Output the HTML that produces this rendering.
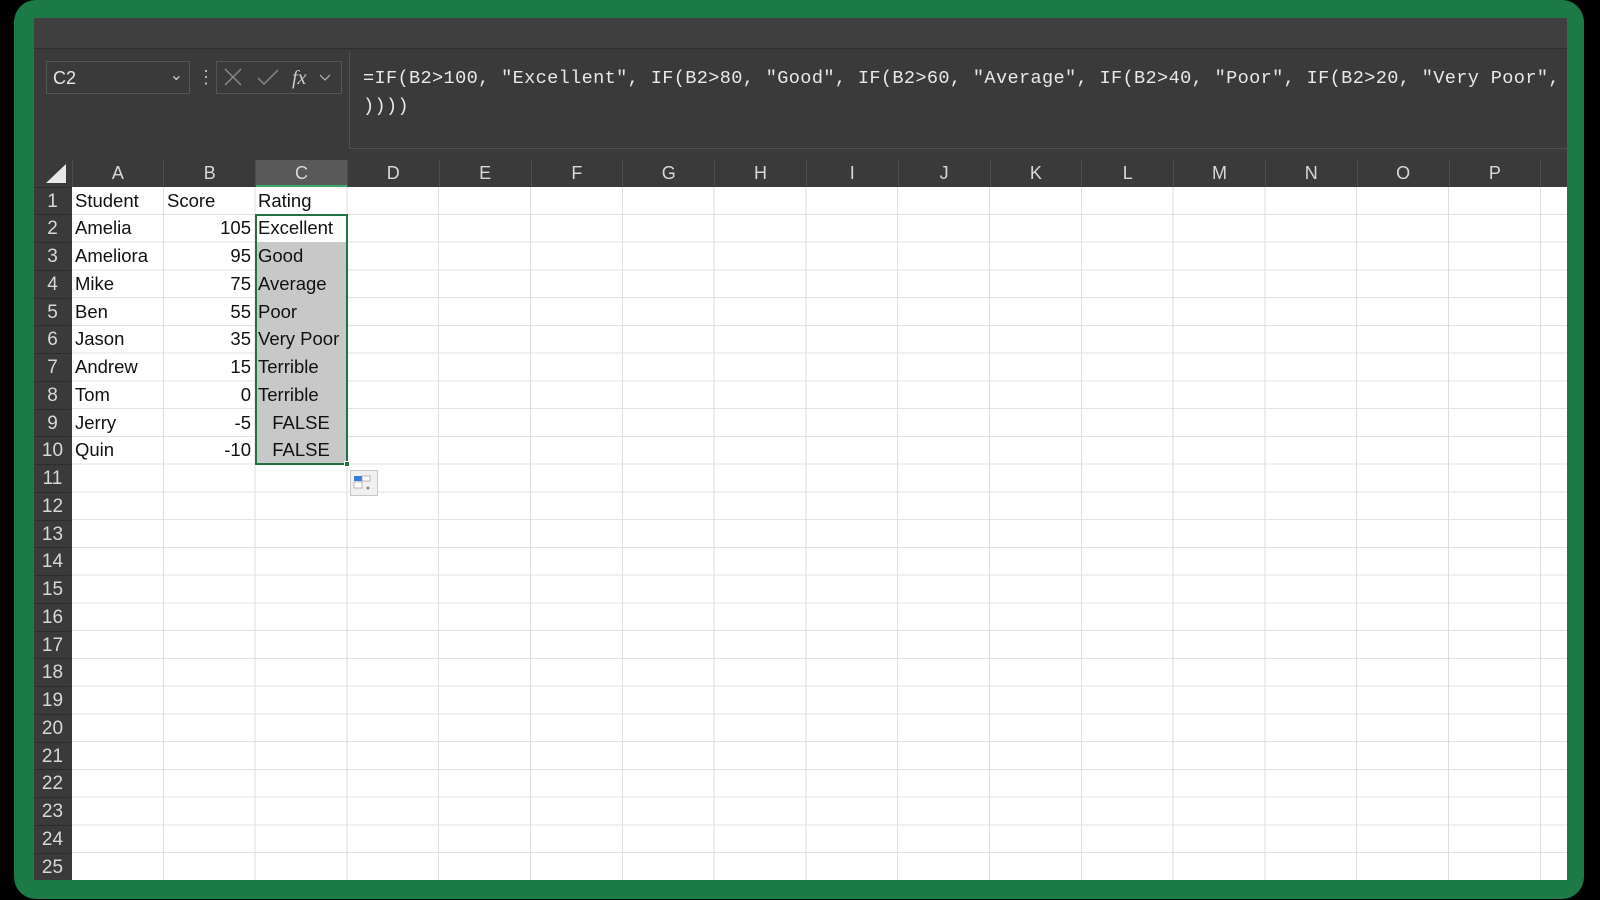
<!DOCTYPE html>
<html><head><meta charset="utf-8"><style>
*{margin:0;padding:0;box-sizing:border-box}
body{width:1600px;height:900px;background:#000;position:relative;overflow:hidden;font-family:"Liberation Sans",sans-serif}
.frame{position:absolute;left:14px;top:0;width:1570px;height:899px;background:#1b7a45;border-radius:22px}
.inner{position:absolute;left:34px;top:18px;width:1533px;height:862px;background:#3a3a3a;overflow:hidden}
.strip{position:absolute;left:0;top:0;width:100%;height:31px;background:#3f3f3f;border-bottom:1px solid #2e2e2e}
.namebox{position:absolute;left:12px;top:43px;width:144px;height:33px;border:1px solid #555;color:#e6e6e6;font-size:18px;padding:6px 0 0 6px}
.fbox{position:absolute;left:315px;top:33px;width:1300px;height:98px;border-left:1px solid #505050;border-bottom:1px solid #505050;background:#3a3a3a}
.ftext{position:absolute;left:13px;top:14px;font-family:"Liberation Mono",monospace;font-size:18.6px;letter-spacing:0.35px;color:#e8e8e8;line-height:28px;white-space:pre}
.hdr{position:absolute;left:0;top:142px;width:100%;height:27px;background:#3a3a3a}
.ch{position:absolute;top:142px;height:27px;color:#d8d8d8;font-size:18px;text-align:center;line-height:27px;border-left:1px solid #4e4e4e}
.rh{position:absolute;left:0;width:37px;color:#d8d8d8;font-size:19px;text-align:center;border-top:1px solid #2c2c2c;background:#3a3a3a}
.grid{position:absolute;left:37.5px;top:168.5px;right:0;bottom:0;background:#fff;
background-image:repeating-linear-gradient(90deg,transparent 0,transparent 90.8px,#dedede 90.8px,#dedede 91.8px),repeating-linear-gradient(180deg,transparent 0,transparent 26.76px,#e3e3e3 26.76px,#e3e3e3 27.76px)}
.c{position:absolute;font-size:18.5px;color:#111;height:27.76px;line-height:27.76px;white-space:nowrap}
</style></head><body>
<div class="frame"></div>
<div class="inner">
<div class="strip"></div>
<div class="namebox">C2<span style="position:absolute;right:6px;top:3px;font-size:16px;color:#ccc">&#8964;</span></div>
<div style="position:absolute;left:163px;top:49px;color:#bbb;font-size:18px">&#8942;</div>
<div style="position:absolute;left:182px;top:43px;width:126px;height:33px;border:1px solid #555"></div>
<svg style="position:absolute;left:188px;top:49px" width="120" height="22">
<path d="M3 2 L19 18 M19 2 L3 18" stroke="#888" stroke-width="1.5" fill="none"/>
<path d="M36 11 L42 17 L56 3" stroke="#888" stroke-width="1.5" fill="none"/>
<text x="70" y="17" font-family="Liberation Serif" font-style="italic" font-size="20" fill="#ccc">fx</text>
<path d="M98 8 L103 13 L108 8" stroke="#aaa" stroke-width="1.3" fill="none"/>
</svg>
<div class="fbox"><div class="ftext">=IF(B2&gt;100, "Excellent", IF(B2&gt;80, "Good", IF(B2&gt;60, "Average", IF(B2&gt;40, "Poor", IF(B2&gt;20, "Very Poor",
))))</div></div>
<div class="hdr"></div>
<svg style="position:absolute;left:10px;top:146px" width="24" height="20"><path d="M22 0 L22 19 L2 19 Z" fill="#e8e8e8"/></svg>
<div style="position:absolute;left:221px;top:142px;width:92px;height:27px;background:#595959;border-bottom:2px solid #3aa86b"></div>
<div class="ch" style="left:37.5px;width:91.8px">A</div><div class="ch" style="left:129.3px;width:91.8px">B</div><div class="ch" style="left:221.1px;width:91.8px">C</div><div class="ch" style="left:312.9px;width:91.8px">D</div><div class="ch" style="left:404.7px;width:91.8px">E</div><div class="ch" style="left:496.5px;width:91.8px">F</div><div class="ch" style="left:588.3px;width:91.8px">G</div><div class="ch" style="left:680.1px;width:91.8px">H</div><div class="ch" style="left:771.9px;width:91.8px">I</div><div class="ch" style="left:863.7px;width:91.8px">J</div><div class="ch" style="left:955.5px;width:91.8px">K</div><div class="ch" style="left:1047.3px;width:91.8px">L</div><div class="ch" style="left:1139.1px;width:91.8px">M</div><div class="ch" style="left:1230.9px;width:91.8px">N</div><div class="ch" style="left:1322.7px;width:91.8px">O</div><div class="ch" style="left:1414.5px;width:91.8px">P</div><div class="ch" style="left:1506.3px;width:91.8px"></div>
<div class="grid"></div>
<div style="position:absolute;left:221.5px;top:196.5px;width:91px;height:250px;background:#c8c8c8"></div>
<div style="position:absolute;left:221.5px;top:196.5px;width:91px;height:27px;background:#fff"></div>
<div style="position:absolute;left:220.5px;top:195.5px;width:93px;height:251px;border:2px solid #217346"></div>
<div style="position:absolute;left:310px;top:443px;width:6px;height:6px;background:#217346;border:1px solid #fff"></div>
<svg style="position:absolute;left:316px;top:452px" width="28" height="26"><rect x="0.5" y="0.5" width="27" height="25" fill="#f0f0f0" stroke="#c8c8c8"/><rect x="4" y="6" width="8" height="5" fill="#3a7bd5"/><rect x="12" y="6" width="8" height="5" fill="#fff" stroke="#999" stroke-width=".7"/><rect x="4" y="12" width="8" height="6" fill="#fff" stroke="#999" stroke-width=".7"/><circle cx="18" cy="18" r="1.5" fill="#888"/></svg>
<div class="rh" style="top:168.5px;height:27.76px;line-height:27px">1</div><div class="rh" style="top:196.26px;height:27.76px;line-height:27px">2</div><div class="rh" style="top:224.02px;height:27.76px;line-height:27px">3</div><div class="rh" style="top:251.78px;height:27.76px;line-height:27px">4</div><div class="rh" style="top:279.54px;height:27.76px;line-height:27px">5</div><div class="rh" style="top:307.3px;height:27.76px;line-height:27px">6</div><div class="rh" style="top:335.06px;height:27.76px;line-height:27px">7</div><div class="rh" style="top:362.82px;height:27.76px;line-height:27px">8</div><div class="rh" style="top:390.58px;height:27.76px;line-height:27px">9</div><div class="rh" style="top:418.34px;height:27.76px;line-height:27px">10</div><div class="rh" style="top:446.1px;height:27.76px;line-height:27px">11</div><div class="rh" style="top:473.86px;height:27.76px;line-height:27px">12</div><div class="rh" style="top:501.62px;height:27.76px;line-height:27px">13</div><div class="rh" style="top:529.38px;height:27.76px;line-height:27px">14</div><div class="rh" style="top:557.14px;height:27.76px;line-height:27px">15</div><div class="rh" style="top:584.9px;height:27.76px;line-height:27px">16</div><div class="rh" style="top:612.66px;height:27.76px;line-height:27px">17</div><div class="rh" style="top:640.42px;height:27.76px;line-height:27px">18</div><div class="rh" style="top:668.18px;height:27.76px;line-height:27px">19</div><div class="rh" style="top:695.94px;height:27.76px;line-height:27px">20</div><div class="rh" style="top:723.7px;height:27.76px;line-height:27px">21</div><div class="rh" style="top:751.46px;height:27.76px;line-height:27px">22</div><div class="rh" style="top:779.22px;height:27.76px;line-height:27px">23</div><div class="rh" style="top:806.98px;height:27.76px;line-height:27px">24</div><div class="rh" style="top:834.74px;height:27.76px;line-height:27px">25</div>

<div class="c" style="left:41px;top:168.5px">Student</div><div class="c" style="left:133px;top:168.5px">Score</div><div class="c" style="left:224px;top:168.5px">Rating</div>
<div class="c" style="left:41px;top:196.3px">Amelia</div><div class="c" style="left:129px;width:88px;text-align:right;top:196.3px">105</div><div class="c" style="left:224px;top:196.3px">Excellent</div>
<div class="c" style="left:41px;top:224px">Ameliora</div><div class="c" style="left:129px;width:88px;text-align:right;top:224px">95</div><div class="c" style="left:224px;top:224px">Good</div>
<div class="c" style="left:41px;top:251.8px">Mike</div><div class="c" style="left:129px;width:88px;text-align:right;top:251.8px">75</div><div class="c" style="left:224px;top:251.8px">Average</div>
<div class="c" style="left:41px;top:279.5px">Ben</div><div class="c" style="left:129px;width:88px;text-align:right;top:279.5px">55</div><div class="c" style="left:224px;top:279.5px">Poor</div>
<div class="c" style="left:41px;top:307.3px">Jason</div><div class="c" style="left:129px;width:88px;text-align:right;top:307.3px">35</div><div class="c" style="left:224px;top:307.3px">Very Poor</div>
<div class="c" style="left:41px;top:335px">Andrew</div><div class="c" style="left:129px;width:88px;text-align:right;top:335px">15</div><div class="c" style="left:224px;top:335px">Terrible</div>
<div class="c" style="left:41px;top:362.8px">Tom</div><div class="c" style="left:129px;width:88px;text-align:right;top:362.8px">0</div><div class="c" style="left:224px;top:362.8px">Terrible</div>
<div class="c" style="left:41px;top:390.6px">Jerry</div><div class="c" style="left:129px;width:88px;text-align:right;top:390.6px">-5</div><div class="c" style="left:221px;width:92px;text-align:center;top:390.6px">FALSE</div>
<div class="c" style="left:41px;top:418.3px">Quin</div><div class="c" style="left:129px;width:88px;text-align:right;top:418.3px">-10</div><div class="c" style="left:221px;width:92px;text-align:center;top:418.3px">FALSE</div>
</div>
</body></html>
